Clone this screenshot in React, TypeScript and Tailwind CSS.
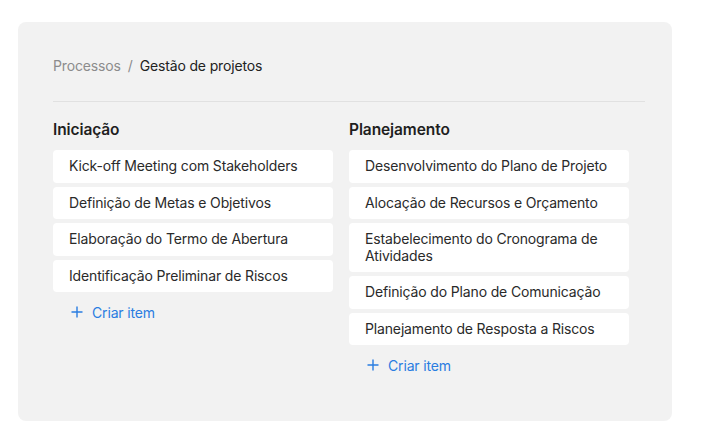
import React from "react";

const left = [
  "Kick-off Meeting com Stakeholders",
  "Definição de Metas e Objetivos",
  "Elaboração do Termo de Abertura",
  "Identificação Preliminar de Riscos",
];
const right = [
  "Desenvolvimento do Plano de Projeto",
  "Alocação de Recursos e Orçamento",
  "Estabelecimento do Cronograma de Atividades",
  "Definição do Plano de Comunicação",
  "Planejamento de Resposta a Riscos",
];

function Column({ title, items }: { title: string; items: string[] }) {
  return (
    <div className="w-[280px] flex flex-col">
      <div className="text-[15.5px] font-semibold leading-[22px] text-[#1f1f1f] mb-[9px] tracking-[-0.1px]">{title}</div>
      <div className="flex flex-col gap-[4px]">
        {items.map((t) => (
          <div
            key={t}
            className="bg-white rounded-[4px] px-4 py-[8px] text-[14px] leading-[16.5px] text-[#2a2a2a] tracking-[-0.15px]"
          >
            {t}
          </div>
        ))}
        <div className="flex items-center h-8 pl-[18px] gap-[9px] text-[14px] text-[#2a7de1] tracking-[-0.15px]">
          <svg width="12" height="12" viewBox="0 0 12 12" className="shrink-0">
            <path d="M6 0.5V11.5M0.5 6H11.5" stroke="#2a7de1" strokeWidth="1.4" />
          </svg>
          <span>Criar item</span>
        </div>
      </div>
    </div>
  );
}

export default function App() {
  return (
    <div className="w-[703px] h-[447px] bg-white pt-[22px] pl-[18px]" style={{ fontFamily: "Inter, 'Noto Sans', sans-serif" }}>
      <div className="w-[654px] h-[399px] bg-[#f2f2f2] rounded-[8px] pt-[34px] pl-[35px] pr-[27px] flex flex-col">
        <div className="flex items-center h-5 text-[14px] leading-5 tracking-[-0.15px]">
          <span className="text-[#8c8c8c]">Processos</span>
          <span className="text-[#8c8c8c] mx-[7px]">/</span>
          <span className="text-[#222]">Gestão de projetos</span>
        </div>
        <div className="mt-[25px] h-px bg-[#e1e1e1]" />
        <div className="mt-[17px] flex gap-4">
          <Column title="Iniciação" items={left} />
          <Column title="Planejamento" items={right} />
        </div>
      </div>
    </div>
  );
}
